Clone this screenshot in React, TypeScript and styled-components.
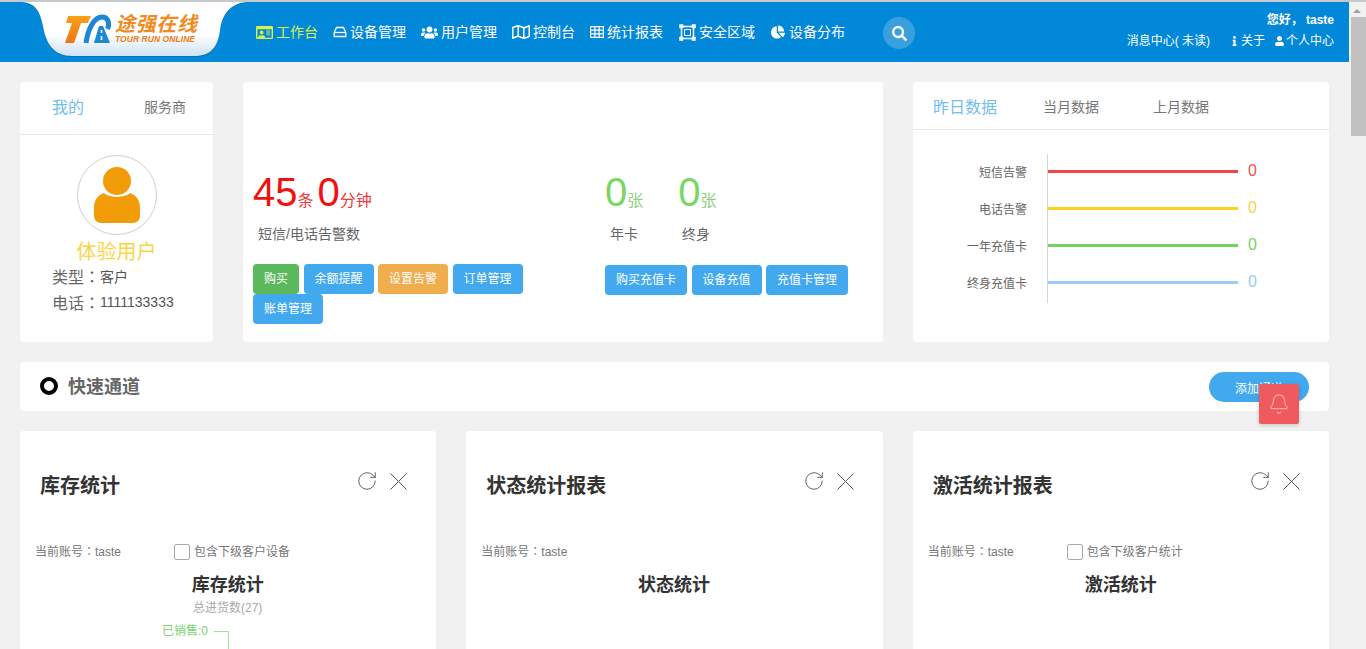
import React from "react";
import styled, { createGlobalStyle } from "styled-components";
import { Bell, RotateCw } from "lucide-react";
import { FaRegIdCard, FaUsers, FaRegMap, FaChartPie, FaSearch, FaInfo, FaUser } from "react-icons/fa";

const FONT = `"Liberation Sans", "Noto Sans CJK SC", sans-serif`;

const Global = createGlobalStyle`
  html, body { margin: 0; padding: 0; height: 100%; overflow: hidden; background: #f1f1f1; }
  body { font-family: ${FONT}; font-size: 14px; color: #666; }
  * { box-sizing: border-box; }
`;

const Shell = styled.div`
  display: flex; height: 649px; overflow: hidden; border-top: 2px solid #c6cacd;
`;
const Main = styled.div`flex: 1; min-width: 0; overflow: hidden;`;
const ScrollTrack = styled.div`
  width: 17px; flex: none; background: #f1f1f1; display: flex; flex-direction: column; align-items: flex-end;
`;
const ScrollArrow = styled.div`
  width: 0; height: 0; margin: 7px 5px 0 0; border-left: 4px solid transparent; border-right: 4px solid transparent; border-bottom: 4px solid #a3a3a3;
`;
const ScrollThumb = styled.div`width: 15px; height: 119px; margin-top: 4px; background: #c1c1c1;`;

const Punct = styled.span`font-family: "Noto Sans CJK TC", sans-serif;`;

const Header = styled.header`
  height: 60px; background: #0288d9; display: flex; align-items: stretch; color: #fff;
`;
const LogoBox = styled.div`width: 256px; flex: none; height: 60px; svg { display: block; }`;
const Nav = styled.nav`display: flex; align-items: center; gap: 15px; height: 60px;`;
const NavItem = styled.a<{ $active?: boolean; $gap?: number; $ml?: number }>`
  display: flex; align-items: center; gap: ${(p) => p.$gap ?? 3}px; font-size: 14px; line-height: 20px; white-space: nowrap;
  margin-left: ${(p) => p.$ml ?? 0}px;
  color: ${(p) => (p.$active ? "#d6f24c" : "#fff")};
`;
const NavIcon = styled.span<{ $w: number }>`
  display: inline-flex; width: ${(p) => p.$w}px; justify-content: center;
  svg { width: ${(p) => p.$w}px; height: ${(p) => p.$w}px; }
`;
const SearchBtn = styled.div`
  width: 32px; height: 32px; border-radius: 50%; background: #3a9fdf; margin-left: 23px; margin-top: 2px;
  display: flex; align-items: center; justify-content: center; color: #fff;
  svg { width: 15px; height: 15px; }
`;
const HeaderRight = styled.div`
  margin-left: auto; padding: 10px 15px 0 0; display: flex; flex-direction: column; align-items: flex-end; font-size: 12px;
`;
const Hello = styled.div`font-weight: 700; line-height: 16px;`;
const UserLinks = styled.div`display: flex; align-items: center; margin-top: 4px; line-height: 18px;`;
const MsgLink = styled.span`margin-right: 10px;`;
const SmallLink = styled.span`
  display: inline-flex; align-items: center; gap: 2px; margin-left: 10px;
  svg { width: 9px; height: 10px; }
`;

const Content = styled.div`padding: 20px 20px 0;`;
const TopRow = styled.div`display: grid; grid-template-columns: 193px 640px 416px; gap: 30px;`;
const Card = styled.section`background: #fff; border-radius: 4px;`;
const TopCard = styled(Card)`height: 260px;`;

const Tabs = styled.div<{ $h: number; $pb?: number }>`
  height: ${(p) => p.$h}px; padding-bottom: ${(p) => p.$pb ?? 0}px; border-bottom: 1px solid #eaeaea; display: flex; align-items: center;
`;
const Tab = styled.span<{ $active?: boolean; $w: number; $pl?: number }>`
  width: ${(p) => p.$w}px; padding-left: ${(p) => p.$pl ?? 0}px; flex: none;
  font-size: ${(p) => (p.$active ? 16 : 14)}px;
  color: ${(p) => (p.$active ? "#72bdf0" : "#777")};
`;

const ProfileBody = styled.div`display: flex; flex-direction: column; align-items: center; padding-top: 20px;`;
const Avatar = styled.div`
  width: 80px; height: 80px; border: 1px solid #cfcfcf; border-radius: 50%; display: flex; align-items: center; justify-content: center;
`;
const UserName = styled.div`font-size: 20px; line-height: 22px; color: #f9d546; margin-top: 6px;`;
const InfoList = styled.div`align-self: stretch; padding-left: 32px;`;
const InfoRow = styled.div`display: flex; align-items: center; height: 26px; color: #555; font-size: 14px;`;
const InfoKey = styled.span`font-size: 16px; width: 48px; flex: none; white-space: nowrap; color: #666;`;

const StatsBody = styled.div`display: flex; padding: 88px 0 0 10px;`;
const StatLeft = styled.div`width: 352px;`;
const Numbers = styled.div`height: 44px; display: flex; align-items: flex-end; white-space: nowrap;`;
const BigNum = styled.span<{ $c: string }>`font-size: 40px; line-height: 44px; color: ${(p) => p.$c};`;
const Unit = styled.span<{ $c: string; $mr?: number }>`
  font-size: 16px; line-height: 24px; color: ${(p) => p.$c}; margin-right: ${(p) => p.$mr ?? 0}px; margin-bottom: 1px;
`;
const StatLabels = styled.div`display: flex; height: 20px; margin-top: 10px; line-height: 20px; color: #666;`;
const StatLabel = styled.span<{ $ml: number; $w?: number }>`
  margin-left: ${(p) => p.$ml}px; ${(p) => (p.$w ? `width:${p.$w}px;` : "")} flex: none;
`;
const Buttons = styled.div<{ $mt: number }>`
  display: flex; flex-wrap: wrap; column-gap: 4.5px; max-width: 300px; margin-top: ${(p) => p.$mt}px;
`;
const Btn = styled.button<{ $bg?: string }>`
  height: 30px; padding: 0 11px 3px; border: 0; border-radius: 4px; color: #fff; font-family: ${FONT}; font-size: 12px; white-space: nowrap;
  background: ${(p) => p.$bg ?? "#42a9ee"};
`;

const ChartWrap = styled.div`display: grid; grid-template-columns: 114px 1fr; padding: 24px 0 0 0;`;
const ChartLabels = styled.div`display: flex; flex-direction: column; height: 149px;`;
const ChartLabel = styled.div`
  height: 37px; padding-top: 10px; line-height: 18px; font-size: 12px; color: #666; text-align: right;
`;
const ChartPlot = styled.div`
  margin-left: 20px; width: 250px; height: 149px; border-left: 1px solid #d5d5d5; display: flex; flex-direction: column;
`;
const ChartRow = styled.div`height: 37px; display: flex; align-items: center; padding-bottom: 3px;`;
const Bar = styled.div<{ $c: string }>`width: 190px; height: 3px; background: ${(p) => p.$c};`;
const BarVal = styled.span<{ $c: string }>`margin: 0 0 1px 10px; font-size: 16px; line-height: 20px; color: ${(p) => p.$c};`;

const QuickBar = styled(Card)`
  margin-top: 20px; height: 49px; display: flex; align-items: center; padding: 0 20px;
`;
const Ring = styled.span`width: 18px; height: 18px; margin-bottom: 1px; border: 4px solid #000; border-radius: 50%; flex: none;`;
const QuickTitle = styled.h2`margin: 0 0 3px 10px; font-size: 18px; font-weight: 700; color: #666;`;
const AddBtn = styled.button`
  margin-left: auto; width: 100px; height: 30px; padding: 1px 0 0; border: 0; border-radius: 15px; background: #42a9ee; color: #fff;
  font-family: ${FONT}; font-size: 12px;
`;
const AlertBox = styled.div`
  position: fixed; left: 1259px; top: 384px; width: 40px; height: 40px; border-radius: 2px; background: #ef5a5f; color: #f9a6a8;
  box-shadow: 0 1px 4px rgba(0,0,0,.2); display: flex; align-items: center; justify-content: center;
`;

const Panels = styled.div`margin-top: 20px; display: grid; grid-template-columns: repeat(3, 1fr); gap: 30px;`;
const Panel = styled(Card)`height: 400px;`;
const PanelHead = styled.div`
  height: 102px; padding: 39px 29px 0 20px; display: flex; align-items: flex-start; justify-content: space-between;
`;
const PanelTitle = styled.h3`margin: 0; font-size: 20px; line-height: 32px; font-weight: 700; color: #333;`;
const PanelTools = styled.div`display: flex; gap: 12px; color: #555; margin-top: 0;`;
const CloseIcon = styled.svg`margin-top: 3px; display: block;`;
const AccountRow = styled.div`display: flex; align-items: center; height: 36px; padding: 0 0 2px 15px; font-size: 12px; color: #777;`;
const Account = styled.span`width: 139px; flex: none;`;
const CheckBox = styled.span`width: 16px; height: 16px; border: 1px solid #aaa; border-radius: 2px; margin: 4px 4px 0 0; flex: none;`;
const ChartTitle = styled.div<{ $pr?: number }>`
  margin-top: 4px; padding-right: ${(p) => p.$pr ?? 0}px; text-align: center; font-size: 18px; line-height: 24px; font-weight: 700; color: #333;
`;
const ChartSub = styled.div`margin-top: 3px; padding-right: 1px; text-align: center; font-size: 12px; line-height: 16px; color: #aaa;`;
const TreeRow = styled.div`display: flex; align-items: flex-start; padding-left: 142px; margin-top: 7px;`;
const TreeLabel = styled.span`font-size: 12px; line-height: 16px; color: #7ed36d;`;
const TreeSvg = styled.svg`margin-left: 6px; flex: none;`;

const LogoSvg = () => (
  <svg width="256" height="60" viewBox="0 0 256 60">
    <defs>
      <linearGradient id="tab" x1="0" y1="0" x2="0" y2="1">
        <stop offset="0.6" stopColor="#ffffff" />
        <stop offset="1" stopColor="#cfe2f2" />
      </linearGradient>
      <linearGradient id="t" x1="0" y1="0" x2="0" y2="1">
        <stop offset="0" stopColor="#f9a11b" />
        <stop offset="1" stopColor="#ee7410" />
      </linearGradient>
    </defs>
    <path d="M22 0 C36 1 40 10 43 24 C46 42 54 54 72 54 L194 54 C212 54 218 44 220 28 C222 12 230 2 246 0 Z" fill="#0a5f9e" opacity=".55" transform="translate(0,1)" />
    <path d="M22 0 C36 1 40 10 43 24 C46 42 54 54 72 54 L194 54 C212 54 218 44 220 28 C222 12 230 2 246 0 Z" fill="url(#tab)" />
    <path d="M68 14 L91 14 L88 21 L81 21 L74 41 L65 41 L72 21 L66 21 Z" fill="url(#t)" />
    <path d="M86 41 C88 27 94 15 102 15 C108 15 110 21 107.5 27" fill="none" stroke="#1c87d2" strokeWidth="5" />
    <path d="M99 24 L103 24 L110 41 L94 41 Z" fill="#1c87d2" />
    <path d="M101.5 28 L101.5 31 M101.5 34 L101.5 38" stroke="#fff" strokeWidth="1.6" />
    <text x="115" y="29" fontFamily='"Noto Sans CJK SC", sans-serif' fontSize="20" fontWeight="700" fontStyle="italic" fill="#f28a1e" textLength="82">途强在线</text>
    <text x="115" y="39.5" fontFamily='"Liberation Sans", sans-serif' fontSize="8.5" fontWeight="700" fontStyle="italic" fill="#ee7a12" textLength="80">TOUR RUN ONLINE</text>
  </svg>
);

const AvatarIcon = () => (
  <svg width="48" height="58" viewBox="0 0 48 58">
    <circle cx="24" cy="15" r="14" fill="#f29c0a" />
    <path d="M11 27 C16 32 32 32 37 27 C43 29 47 34 47 42 L47 50 C47 54 44 57 40 57 L8 57 C4 57 1 54 1 50 L1 42 C1 34 5 29 11 27 Z" fill="#f29c0a" />
  </svg>
);

const DriveIcon = () => (
  <svg viewBox="0 0 14 14" fill="none" stroke="currentColor" strokeWidth="1.3">
    <path d="M3.5 2.5 H10.5 L12.8 7.5 V11.5 H1.2 V7.5 Z" />
    <path d="M1.2 7.5 H12.8" />
  </svg>
);

const GridIcon = () => (
  <svg viewBox="0 0 14 14" fill="none" stroke="currentColor" strokeWidth="1.2">
    <path d="M0.6 1.6 H13.4 V12.4 H0.6 Z M0.6 5.2 H13.4 M0.6 8.8 H13.4 M4.9 1.6 V12.4 M9.1 1.6 V12.4" />
  </svg>
);

const ZoneIcon = () => (
  <svg viewBox="0 0 17 17" fill="none" stroke="currentColor">
    <path d="M2.5 2.5 H14.5 V14.5 H2.5 Z" strokeWidth="1.5" />
    <path d="M5.5 5.5 H11.5 V11.5 H5.5 Z" strokeWidth="1" />
    <path d="M0.5 0.5 H4 V4 H0.5 Z M13 0.5 H16.5 V4 H13 Z M0.5 13 H4 V16.5 H0.5 Z M13 13 H16.5 V16.5 H13 Z" fill="currentColor" strokeWidth="0.5" />
  </svg>
);

const nav: { t: string; i: React.ReactNode; w: number; a?: boolean; gap?: number; ml?: number }[] = [
  { t: "工作台", i: <FaRegIdCard />, w: 17, a: true },
  { t: "设备管理", i: <DriveIcon />, w: 14 },
  { t: "用户管理", i: <FaUsers />, w: 17 },
  { t: "控制台", i: <FaRegMap />, w: 18 },
  { t: "统计报表", i: <GridIcon />, w: 14 },
  { t: "安全区域", i: <ZoneIcon />, w: 17, ml: 1 },
  { t: "设备分布", i: <FaChartPie />, w: 14, gap: 4, ml: 1 },
];

const bars = [
  { l: "短信告警", c: "#f44545", v: "#f05050" },
  { l: "电话告警", c: "#fbd31d", v: "#f8d24a" },
  { l: "一年充值卡", c: "#76d05f", v: "#79cf65" },
  { l: "终身充值卡", c: "#9ccbf8", v: "#9cc8f2" },
];

const PanelTool = () => (
  <PanelTools>
    <RotateCw size={22} strokeWidth={1} />
    <CloseIcon width="17" height="17" viewBox="0 0 17 17" fill="none" stroke="currentColor" strokeWidth="1">
      <path d="M0.5 0.5 L16.5 16.5 M16.5 0.5 L0.5 16.5" />
    </CloseIcon>
  </PanelTools>
);

export default function App() {
  return (
    <>
      <Global />
      <Shell>
        <Main>
          <Header>
            <LogoBox><LogoSvg /></LogoBox>
            <Nav>
              {nav.map((n) => (
                <NavItem key={n.t} $active={n.a} $gap={n.gap} $ml={n.ml}>
                  <NavIcon $w={n.w}>{n.i}</NavIcon>
                  {n.t}
                </NavItem>
              ))}
              <SearchBtn><FaSearch /></SearchBtn>
            </Nav>
            <HeaderRight>
              <Hello>您好， taste</Hello>
              <UserLinks>
                <MsgLink>消息中心( 未读)</MsgLink>
                <SmallLink><FaInfo />关于</SmallLink>
                <SmallLink><FaUser />个人中心</SmallLink>
              </UserLinks>
            </HeaderRight>
          </Header>
          <Content>
            <TopRow>
              <TopCard>
                <Tabs $h={53} $pb={4}>
                  <Tab $active $w={124} $pl={32}>我的</Tab>
                  <Tab $w={60}>服务商</Tab>
                </Tabs>
                <ProfileBody>
                  <Avatar><AvatarIcon /></Avatar>
                  <UserName>体验用户</UserName>
                  <InfoList>
                    <InfoRow><InfoKey>类型<Punct>：</Punct></InfoKey>客户</InfoRow>
                    <InfoRow><InfoKey>电话<Punct>：</Punct></InfoKey>1111133333</InfoRow>
                  </InfoList>
                </ProfileBody>
              </TopCard>
              <TopCard>
                <StatsBody>
                  <StatLeft>
                    <Numbers>
                      <BigNum $c="#f40f0f">45</BigNum>
                      <Unit $c="#f03a3a" $mr={4}>条</Unit>
                      <BigNum $c="#f40f0f">0</BigNum>
                      <Unit $c="#f03a3a">分钟</Unit>
                    </Numbers>
                    <StatLabels><StatLabel $ml={5}>短信/电话告警数</StatLabel></StatLabels>
                    <Buttons $mt={20}>
                      <Btn $bg="#5cb85c">购买</Btn>
                      <Btn>余额提醒</Btn>
                      <Btn $bg="#f0ad4e">设置告警</Btn>
                      <Btn>订单管理</Btn>
                      <Btn>账单管理</Btn>
                    </Buttons>
                  </StatLeft>
                  <div>
                    <Numbers>
                      <BigNum $c="#7ad665">0</BigNum>
                      <Unit $c="#8fcf80" $mr={35}>张</Unit>
                      <BigNum $c="#7ad665">0</BigNum>
                      <Unit $c="#8fcf80">张</Unit>
                    </Numbers>
                    <StatLabels>
                      <StatLabel $ml={5} $w={28}>年卡</StatLabel>
                      <StatLabel $ml={44}>终身</StatLabel>
                    </StatLabels>
                    <Buttons $mt={21}>
                      <Btn>购买充值卡</Btn>
                      <Btn>设备充值</Btn>
                      <Btn>充值卡管理</Btn>
                    </Buttons>
                  </div>
                </StatsBody>
              </TopCard>
              <TopCard>
                <Tabs $h={48}>
                  <Tab $active $w={130} $pl={20}>昨日数据</Tab>
                  <Tab $w={110}>当月数据</Tab>
                  <Tab $w={60}>上月数据</Tab>
                </Tabs>
                <ChartWrap>
                  <ChartLabels>
                    {bars.map((b) => <ChartLabel key={b.l}>{b.l}</ChartLabel>)}
                  </ChartLabels>
                  <ChartPlot>
                    {bars.map((b) => (
                      <ChartRow key={b.l}>
                        <Bar $c={b.c} />
                        <BarVal $c={b.v}>0</BarVal>
                      </ChartRow>
                    ))}
                  </ChartPlot>
                </ChartWrap>
              </TopCard>
            </TopRow>
            <QuickBar>
              <Ring />
              <QuickTitle>快速通道</QuickTitle>
              <AddBtn>添加通道</AddBtn>
            </QuickBar>
            <Panels>
              <Panel>
                <PanelHead><PanelTitle>库存统计</PanelTitle><PanelTool /></PanelHead>
                <AccountRow>
                  <Account>当前账号<Punct>：</Punct>taste</Account>
                  <CheckBox />包含下级客户设备
                </AccountRow>
                <ChartTitle $pr={1}>库存统计</ChartTitle>
                <ChartSub>总进货数(27)</ChartSub>
                <TreeRow>
                  <TreeLabel>已销售:0</TreeLabel>
                  <TreeSvg width="16" height="30" viewBox="0 0 16 30">
                    <path d="M0 8.5 H14.5 V30" fill="none" stroke="#a5e094" strokeWidth="1" />
                  </TreeSvg>
                </TreeRow>
              </Panel>
              <Panel>
                <PanelHead><PanelTitle>状态统计报表</PanelTitle><PanelTool /></PanelHead>
                <AccountRow><Account>当前账号<Punct>：</Punct>taste</Account></AccountRow>
                <ChartTitle $pr={1}>状态统计</ChartTitle>
              </Panel>
              <Panel>
                <PanelHead><PanelTitle>激活统计报表</PanelTitle><PanelTool /></PanelHead>
                <AccountRow>
                  <Account>当前账号<Punct>：</Punct>taste</Account>
                  <CheckBox />包含下级客户统计
                </AccountRow>
                <ChartTitle>激活统计</ChartTitle>
              </Panel>
            </Panels>
          </Content>
        </Main>
        <ScrollTrack>
          <ScrollArrow />
          <ScrollThumb />
        </ScrollTrack>
        <AlertBox><Bell size={22} strokeWidth={1.3} /></AlertBox>
      </Shell>
    </>
  );
}
